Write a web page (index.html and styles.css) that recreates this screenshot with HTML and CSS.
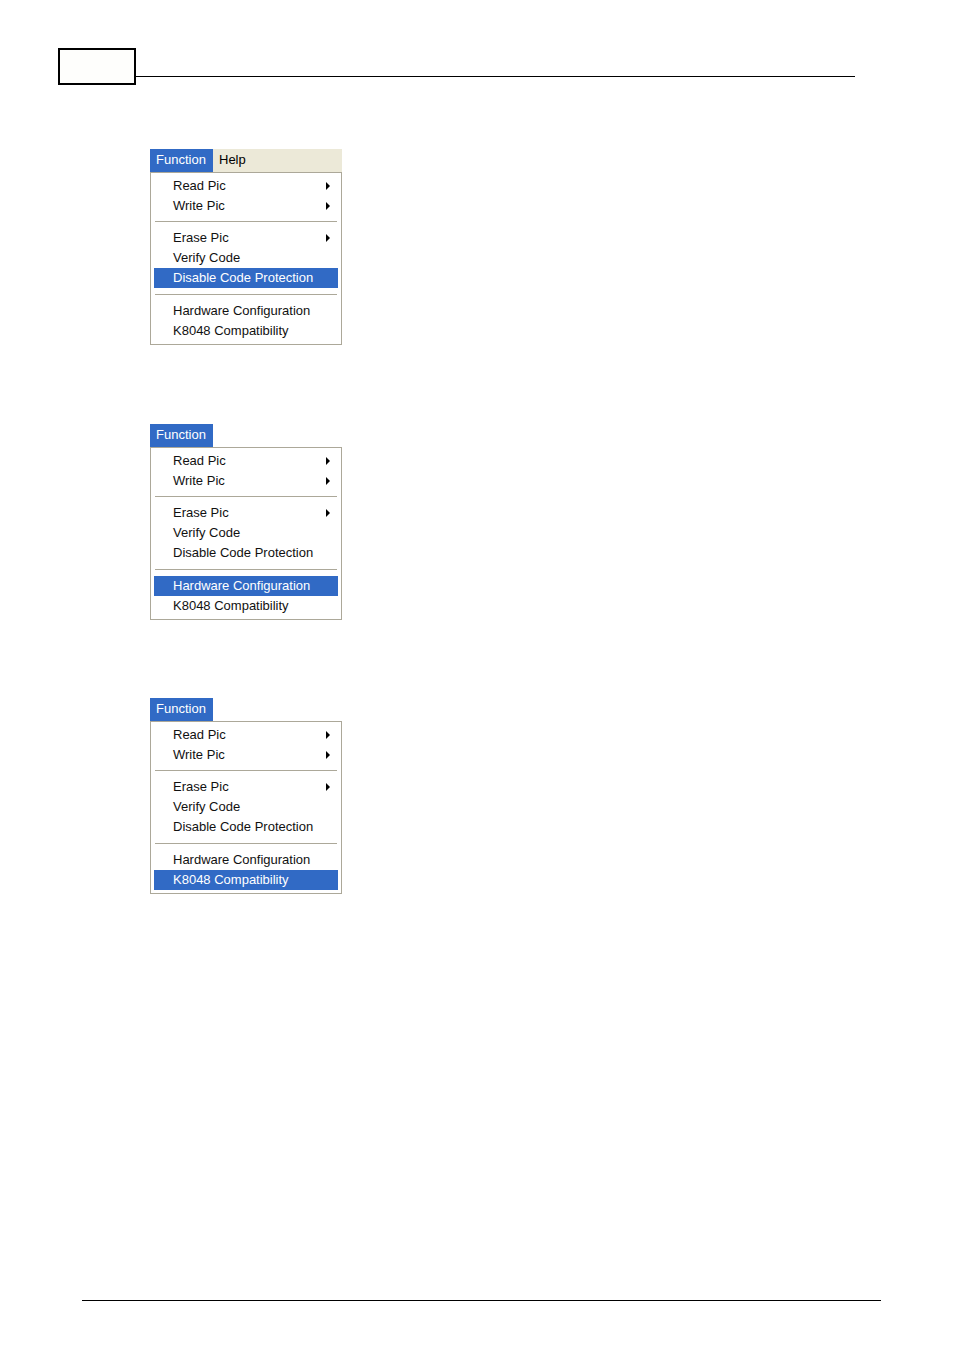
FILE: index.html
```html
<!DOCTYPE html>
<html lang="en">
<head>
<meta charset="utf-8">
<title>Function menu</title>
<link rel="stylesheet" href="styles.css">
</head>
<body>
<div class="page">
  <header class="head">
    <div class="tab-box"></div>
    <div class="head-rule"></div>
  </header>

  <main class="shots">
    <figure class="menu">
      <div class="menubar full">
        <span class="mb-item active">Function</span><span class="mb-item">Help</span>
      </div>
      <ul class="dropdown">
        <li class="item sub">Read Pic</li>
        <li class="item sub">Write Pic</li>
        <li class="sep"></li>
        <li class="item sub">Erase Pic</li>
        <li class="item">Verify Code</li>
        <li class="item hl">Disable Code Protection</li>
        <li class="sep wide"></li>
        <li class="item">Hardware Configuration</li>
        <li class="item">K8048 Compatibility</li>
      </ul>
    </figure>

    <figure class="menu second">
      <div class="menubar">
        <span class="mb-item active">Function</span>
      </div>
      <ul class="dropdown">
        <li class="item sub">Read Pic</li>
        <li class="item sub">Write Pic</li>
        <li class="sep"></li>
        <li class="item sub">Erase Pic</li>
        <li class="item">Verify Code</li>
        <li class="item">Disable Code Protection</li>
        <li class="sep wide"></li>
        <li class="item hl">Hardware Configuration</li>
        <li class="item">K8048 Compatibility</li>
      </ul>
    </figure>

    <figure class="menu">
      <div class="menubar">
        <span class="mb-item active">Function</span>
      </div>
      <ul class="dropdown">
        <li class="item sub">Read Pic</li>
        <li class="item sub">Write Pic</li>
        <li class="sep"></li>
        <li class="item sub">Erase Pic</li>
        <li class="item">Verify Code</li>
        <li class="item">Disable Code Protection</li>
        <li class="sep wide"></li>
        <li class="item">Hardware Configuration</li>
        <li class="item hl">K8048 Compatibility</li>
      </ul>
    </figure>
  </main>

  <footer class="foot-rule"></footer>
</div>
</body>
</html>
```

FILE: styles.css
```css
* { box-sizing: border-box; }

html, body {
  margin: 0;
  padding: 0;
  background: #ffffff;
}

.page {
  width: 954px;
  height: 1351px;
  position: relative;
  font-family: "Liberation Sans", Arial, sans-serif;
  color: #000;
}

.head {
  display: flex;
  align-items: flex-start;
  padding: 48px 0 0 58px;
}

.tab-box {
  width: 78px;
  height: 37px;
  border: 2px solid #000;
  background: #fefefc;
}

.head-rule {
  width: 719px;
  margin-top: 28px;
  border-top: 1px solid #000;
}

.shots {
  display: flex;
  flex-direction: column;
  gap: 78px;
  padding: 64px 0 0 150px;
}

.menu {
  margin: 0;
  width: 192px;
}

.menu.second {
  margin-top: 1px;
}

.menubar {
  display: flex;
  height: 23px;
  font-size: 13px;
  line-height: 22px;
}

.menubar.full {
  background: #ece9d8;
}

.mb-item {
  padding: 0 7px 0 6px;
}

.mb-item.active {
  width: 63px;
  background: #316ac5;
  color: #fff;
}

.dropdown {
  list-style: none;
  margin: 0;
  padding: 3px 3px 3px;
  border: 1px solid #aca899;
  background: #fff;
}

.item {
  position: relative;
  height: 20px;
  line-height: 20px;
  padding-left: 19px;
  font-size: 13px;
  color: #111;
  white-space: nowrap;
}

.item.hl {
  background: #316ac5;
  color: #fff;
}

.item.sub::after {
  content: "";
  position: absolute;
  right: 8px;
  top: 6px;
  border-left: 4px solid #000;
  border-top: 4px solid transparent;
  border-bottom: 4px solid transparent;
}

.sep {
  height: 12px;
  padding: 5px 1px 0;
}

.sep.wide {
  height: 13px;
  padding-top: 6px;
}

.sep::before {
  content: "";
  display: block;
  border-top: 1px solid #aca899;
  border-bottom: 1px solid #fff;
}

.foot-rule {
  position: absolute;
  left: 82px;
  top: 1300px;
  width: 799px;
  border-top: 1px solid #000;
}
```
